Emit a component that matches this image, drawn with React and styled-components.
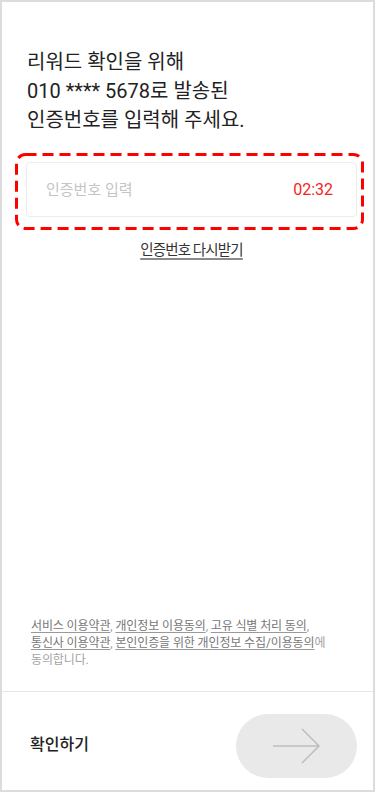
import React from "react";
import styled, { createGlobalStyle } from "styled-components";

const Global = createGlobalStyle`
  html, body { margin: 0; padding: 0; background: #fff; }
  body { font-family: Roboto, "Noto Sans CJK KR", sans-serif; -webkit-font-smoothing: antialiased; }
  * { box-sizing: border-box; }
`;

const Frame = styled.div`
  height: 100vh;
  border: 2px solid #dcdcdc;
  display: flex;
  flex-direction: column;
  background: #fff;
`;

const Main = styled.main`
  flex: 1;
  padding: 46px 16px 0 24px;
  display: flex;
  flex-direction: column;
`;

const Title = styled.h1`
  margin: 0 0 0 1px;
  font-size: 20px;
  font-weight: 400;
  line-height: 29px;
  color: #222;
`;

const FieldWrap = styled.div`
  position: relative;
  margin-top: 27px;
`;

const Field = styled.div`
  height: 55px;
  border: 1px solid #ececec;
  border-radius: 4px;
  display: flex;
  align-items: center;
  justify-content: space-between;
  padding: 0 23px 0 19px;
`;

const Input = styled.input`
  flex: 1;
  min-width: 0;
  border: none;
  outline: none;
  background: transparent;
  font-family: inherit;
  font-size: 15px;
  color: #333;
  padding: 0;
  &::placeholder { color: #c4c4c4; }
`;

const Timer = styled.span`
  font-size: 16px;
  color: #f52424;
`;

const Highlight = styled.svg`
  position: absolute;
  top: -9px;
  left: -11px;
  width: calc(100% + 18px);
  height: calc(100% + 22px);
  overflow: visible;
  pointer-events: none;
`;

const Resend = styled.button`
  align-self: center;
  margin-top: 24px;
  border: none;
  background: none;
  padding: 0;
  font-family: inherit;
  font-size: 14.5px;
  letter-spacing: -0.06em;
  line-height: 20px;
  color: #333;
  text-decoration: underline;
  text-decoration-color: #8a8a8a;
  text-decoration-thickness: 1.5px;
  text-underline-offset: 3px;
`;

const Terms = styled.p`
  margin: 0;
  padding: 0 14px 22px 29px;
  font-size: 12px;
  line-height: 17px;
  letter-spacing: -0.01em;
  color: #a3a3a3;
`;

const TermLink = styled.span`
  color: #777;
  text-decoration: underline;
  text-decoration-color: #999;
  text-underline-offset: 2px;
`;

const Footer = styled.footer`
  border-top: 1px solid #e6e6e6;
  display: flex;
  align-items: center;
  justify-content: space-between;
  padding: 22px 16px 12px 28px;
`;

const FooterLabel = styled.span`
  font-size: 16px;
  font-weight: 500;
  color: #222;
  margin-top: -6px;
`;

const NextButton = styled.button`
  width: 121px;
  height: 64px;
  border-radius: 32px;
  border: none;
  background: #e9e9e9;
  display: flex;
  align-items: center;
  justify-content: center;
  padding: 0;
`;

function DashedOutline() {
  return (
    <Highlight>
      <rect
        x="1.5"
        y="1.5"
        width="calc(100% - 3px)"
        height="calc(100% - 3px)"
        rx="9"
        fill="none"
        stroke="#ff0000"
        strokeWidth="3"
        strokeDasharray="11 6"
      />
    </Highlight>
  );
}

export default function App() {
  return (
    <>
      <Global />
      <Frame>
        <Main>
          <Title>
            리워드 확인을 위해
            <br />
            010 **** 5678로 발송된
            <br />
            인증번호를 입력해 주세요.
          </Title>
          <FieldWrap>
            <Field>
              <Input placeholder="인증번호 입력" />
              <Timer>02:32</Timer>
            </Field>
            <DashedOutline />
          </FieldWrap>
          <Resend>인증번호 다시받기</Resend>
        </Main>
        <Terms>
          <TermLink>서비스 이용약관</TermLink>, <TermLink>개인정보 이용동의</TermLink>,{" "}
          <TermLink>고유 식별 처리 동의</TermLink>,
          <br />
          <TermLink>통신사 이용약관</TermLink>, <TermLink>본인인증을 위한 개인정보 수집/이용동의</TermLink>에
          <br />
          동의합니다.
        </Terms>
        <Footer>
          <FooterLabel>확인하기</FooterLabel>
          <NextButton aria-label="다음">
            <svg width="49" height="36" viewBox="0 0 49 36" fill="none">
              <path d="M1 18H47" stroke="#bdbdbd" strokeWidth="1.5" />
              <path d="M30 1L47 18L30 35" stroke="#bdbdbd" strokeWidth="1.5" />
            </svg>
          </NextButton>
        </Footer>
      </Frame>
    </>
  );
}
